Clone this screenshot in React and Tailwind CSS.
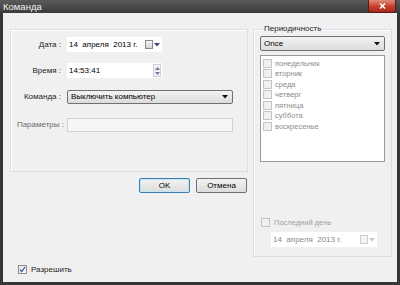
import React from "react";

const font = { fontFamily: '"Liberation Sans", Arial, sans-serif' };

function Check({ checked = false, disabled = false }) {
  return (
    <span
      className={`flex h-[9px] w-[9px] shrink-0 items-center justify-center border ${
        disabled ? "border-[#c4c4c4] bg-[#f0f0f0]" : "border-[#8f8f8f] bg-gradient-to-br from-[#e4e4e4] to-[#fafafa]"
      }`}
    >
      {checked && (
        <svg width="7" height="7" viewBox="0 0 7 7">
          <path d="M1 3.6 L2.8 5.6 L6 1" fill="none" stroke="#2a4fa8" strokeWidth="1.2" />
        </svg>
      )}
    </span>
  );
}

function CalendarBtn({ disabled = false }) {
  return (
    <span className="flex items-center gap-[1px]">
      <span
        className={`h-[9px] w-[8px] border ${disabled ? "border-[#cfcfcf] bg-[#f4f4f4]" : "border-[#8a8a8a] bg-gradient-to-b from-[#f4f4f4] to-[#d6d6d6]"}`}
      />
      <svg width="6" height="4" viewBox="0 0 6 4">
        <path d="M0 0 H6 L3 3.5 Z" fill={disabled ? "#c8c8c8" : "#3a4a6a"} />
      </svg>
    </span>
  );
}

function DateField({ disabled = false, className = "" }) {
  return (
    <div
      className={`flex h-[15px] items-center justify-between bg-white pl-[2px] pr-[2px] ${
        disabled ? "text-[#8a8a8a]" : "text-black"
      } ${className}`}
    >
      <span className="whitespace-pre">14  апреля  2013 г.</span>
      <CalendarBtn disabled={disabled} />
    </div>
  );
}

function Arrow() {
  return (
    <svg width="6" height="4" viewBox="0 0 6 4">
      <path d="M0 0 H6 L3 3.5 Z" fill="#111" />
    </svg>
  );
}

export default function App() {
  const days = ["понедельник", "вторник", "среда", "четверг", "пятница", "суббота", "воскресенье"];

  return (
    <div
      className="flex h-[285px] w-[400px] flex-col bg-[#363636] text-[7.5px] leading-none"
      style={font}
    >
      {/* Title bar */}
      <div className="flex h-[13px] shrink-0 items-start justify-between bg-gradient-to-b from-[#5a5a5a] to-[#3b3b3b] pl-[3px] pr-[4px]">
        <span className="pt-[2px] text-[9.5px] text-[#f2f2f2]">Команда</span>
        <span className="flex h-[13px] w-[28px] items-center justify-center rounded-b-[3px] border border-t-0 border-[#5a1a12] bg-gradient-to-b from-[#e08a7a] via-[#c8432e] to-[#a5281a]">
          <svg width="7" height="6" viewBox="0 0 7 6">
            <path d="M1 0.5 L6 5.5 M6 0.5 L1 5.5" stroke="#fff" strokeWidth="1.5" />
          </svg>
        </span>
      </div>

      {/* Body */}
      <div className="mx-[3px] mb-[3px] flex flex-1 flex-col bg-[#f0f0f0] pl-[7px] pt-[16px] pr-[4px]">
        <div className="flex gap-[5px]">
          {/* Left column */}
          <div className="flex w-[238px] flex-col text-[8px]">
            <div className="flex h-[143px] flex-col border border-[#d5dfe5] pt-[7px] shadow-[inset_1px_1px_0_#ffffff]">
              <div className="flex h-[15px] items-center">
                <span className="w-[51px] pr-[1px] text-right text-[#1e1e1e]">Дата :</span>
                <DateField className="ml-[5px] w-[95px]" />
              </div>
              <div className="mt-[11px] flex h-[15px] items-center">
                <span className="w-[51px] pr-[1px] text-right text-[#1e1e1e]">Время :</span>
                <div className="ml-[5px] flex h-[15px] w-[95px] items-center justify-between bg-white pl-[2px] pr-[1px]">
                  <span>14:53:41</span>
                  <span className="flex h-[13px] w-[8px] flex-col items-center justify-center gap-[2px] border border-[#d0d0d0] bg-[#f2f2f2]">
                    <svg width="5" height="3" viewBox="0 0 5 3">
                      <path d="M0 3 H5 L2.5 0 Z" fill="#6a7a9a" />
                    </svg>
                    <svg width="5" height="3" viewBox="0 0 5 3">
                      <path d="M0 0 H5 L2.5 3 Z" fill="#6a7a9a" />
                    </svg>
                  </span>
                </div>
              </div>
              <div className="mt-[12px] flex h-[14px] items-center">
                <span className="w-[51px] pr-[1px] text-right text-[#1e1e1e]">Команда :</span>
                <div className="ml-[5px] flex h-[14px] w-[166px] items-center justify-between rounded-[2px] border border-[#707070] bg-gradient-to-b from-[#f3f3f3] to-[#dcdcdc] pl-[3px] pr-[4px]">
                  <span>Выключить компьютер</span>
                  <Arrow />
                </div>
              </div>
              <div className="mt-[14px] flex h-[14px] items-center">
                <span className="w-[53px] whitespace-nowrap text-right text-[#6d6d6d]">Параметры :</span>
                <div className="ml-[3px] h-[14px] w-[166px] border border-[#d2d2d2] bg-[#f6f6f6]" />
              </div>
            </div>
            <div className="mt-[6px] flex justify-end gap-[6px] pr-[1px]">
              <button className="flex h-[15px] w-[51px] items-center justify-center rounded-[2px] border border-[#3c7fb1] bg-gradient-to-b from-[#f2f2f2] to-[#dddddd] text-[8px] shadow-[inset_0_0_0_1px_#c4e5f6]">
                OK
              </button>
              <button className="flex h-[15px] w-[51px] items-center justify-center rounded-[2px] border border-[#707070] bg-gradient-to-b from-[#f2f2f2] to-[#dddddd] text-[8px]">
                Отмена
              </button>
            </div>
          </div>

          {/* Right group */}
          <fieldset className="-mt-[4px] flex h-[232px] w-[139px] flex-col border border-[#d5dfe5] px-[6px] pb-[9px] shadow-[inset_1px_1px_0_#ffffff]">
            <legend className="ml-[3px] px-[1px] text-[8px] text-[#1e1e1e]">Периодичность</legend>
            <div className="mt-[3px] flex h-[15px] items-center justify-between rounded-[2px] border border-[#707070] bg-gradient-to-b from-[#f3f3f3] to-[#dcdcdc] pl-[3px] pr-[4px]">
              <span className="text-[8px]">Once</span>
              <Arrow />
            </div>
            <div className="mt-[4px] flex h-[107px] flex-col border border-[#9a9a9a] bg-white pl-[2px] pt-[2px]">
              {days.map((d) => (
                <div key={d} className="flex h-[10.5px] items-center gap-[3px] text-[#8d8d8d]">
                  <Check disabled />
                  <span>{d}</span>
                </div>
              ))}
            </div>
            <div className="mt-auto flex items-center gap-[4px] pl-[1px] text-[#a0a0a0]">
              <Check disabled />
              <span>Последний день</span>
            </div>
            <DateField disabled className="ml-[11px] mt-[5px] w-[106px] text-[8px]" />
          </fieldset>
        </div>

        <div className="mt-[8px] flex items-center gap-[4px] pl-[8px] text-[8px] text-[#1e1e1e]">
          <Check checked />
          <span>Разрешить</span>
        </div>
      </div>
    </div>
  );
}
